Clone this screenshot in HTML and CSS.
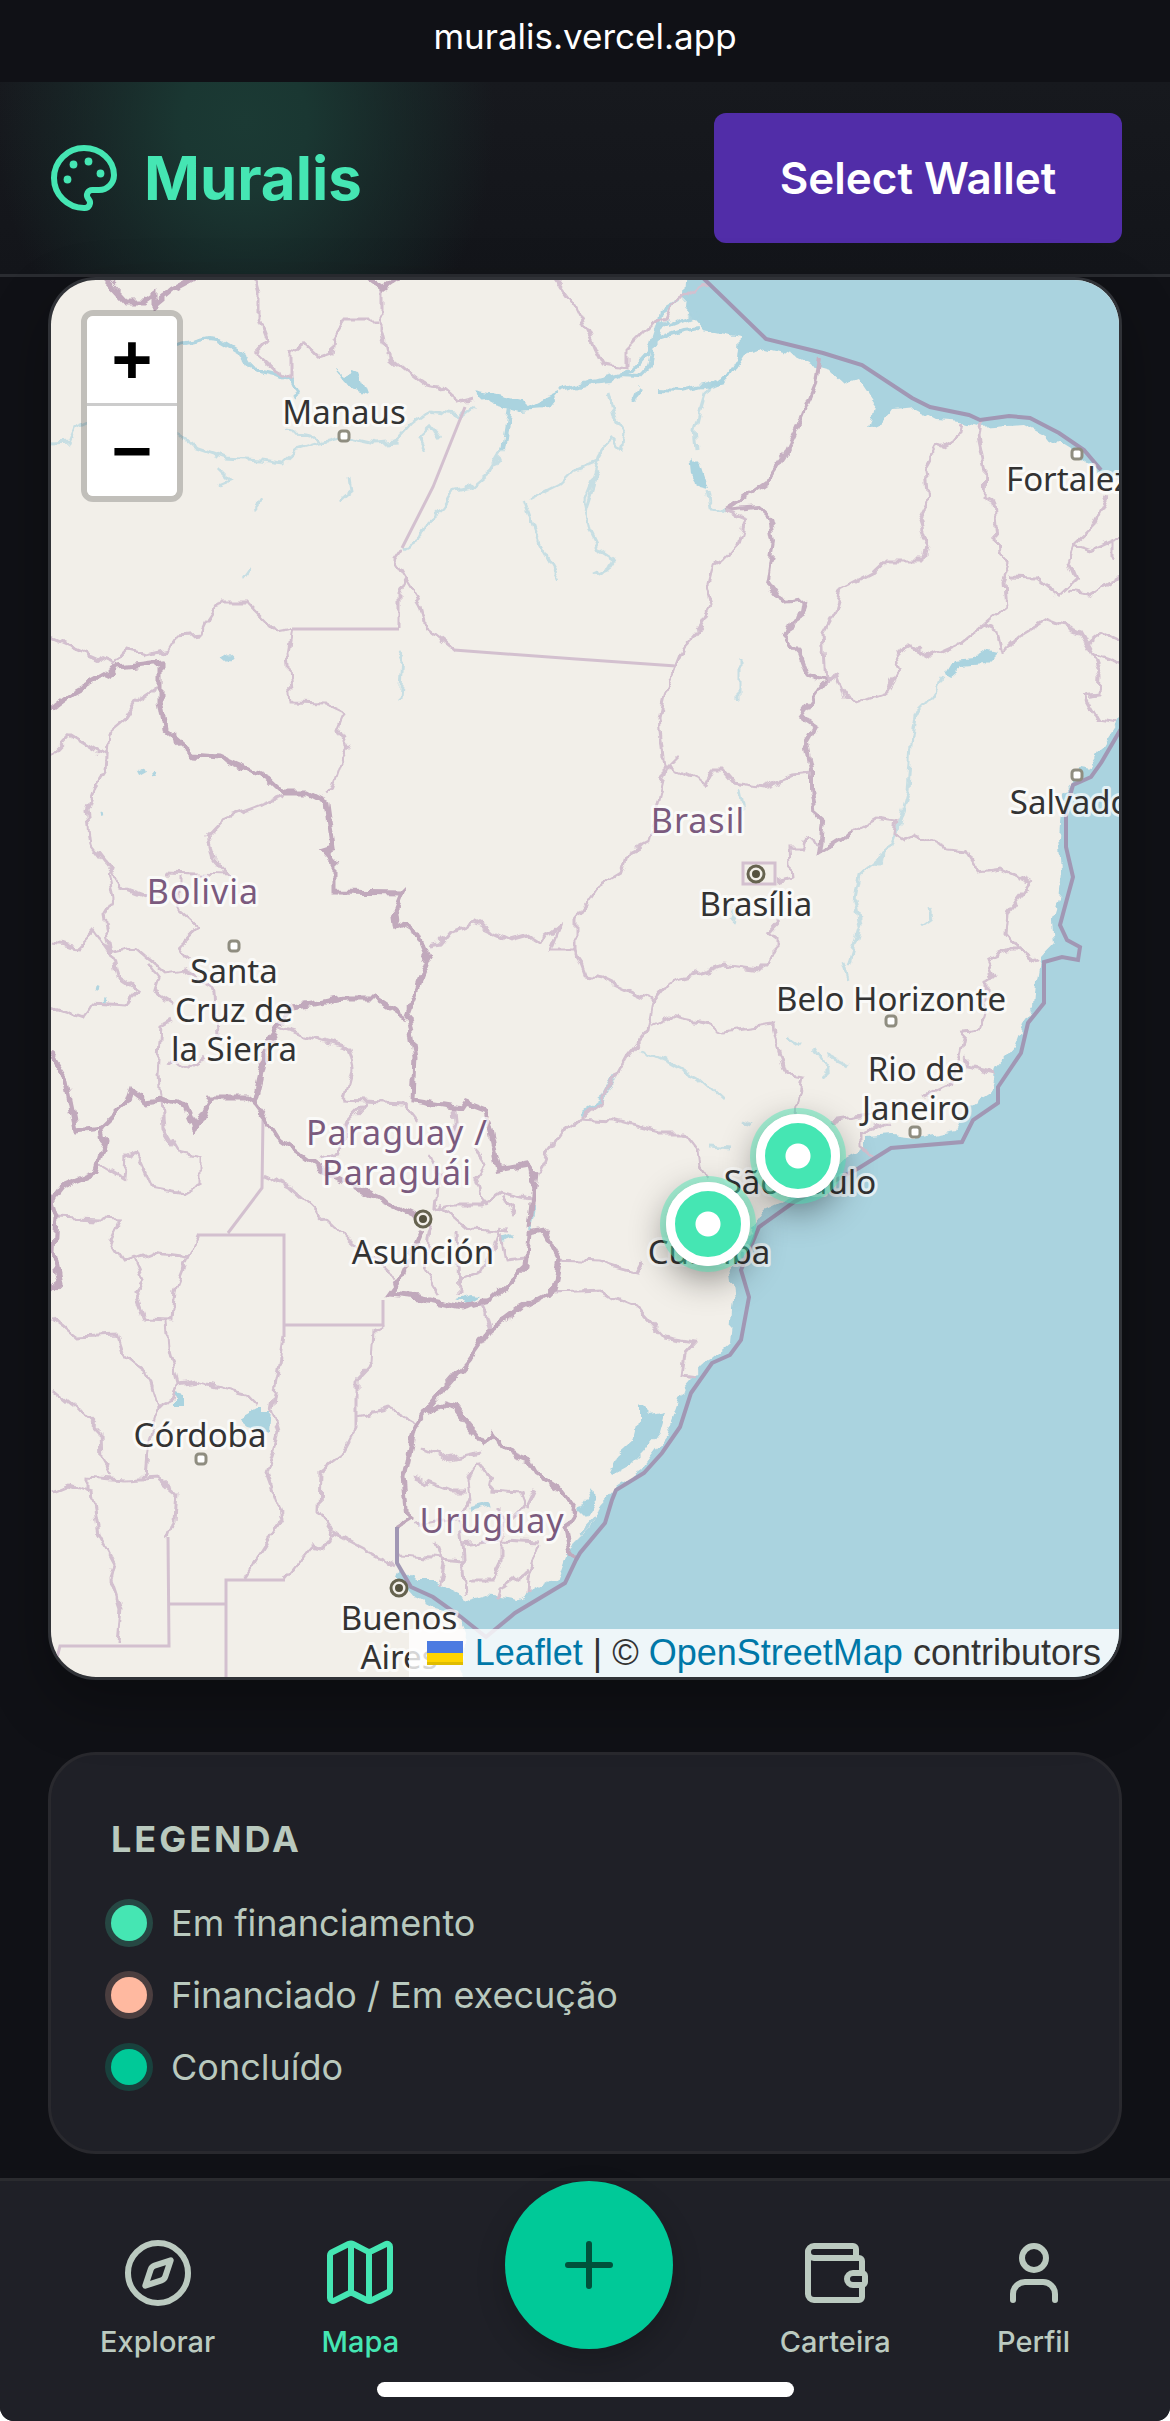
FILE: index.html
```html
<!DOCTYPE html>
<html lang="pt-BR">
<head>
    <meta charset="UTF-8">
    <meta name="viewport" content="width=device-width, initial-scale=1.0">
    <title>Muralis</title>
    <link rel="stylesheet" href="styles.css">
</head>
<body>
    <div class="app">
        <div class="url-bar">muralis.vercel.app</div>

        <!-- Header -->
        <header class="header">
            <a class="brand" href="#">
                <svg class="icon" viewBox="0 0 24 24">
                    <path d="M12 22a1 1 0 0 1 0-20 10 9 0 0 1 10 9 5 5 0 0 1-5 5h-2.250a1.750 1.750 0 0 0-1.400 2.800l.3.4a1.750 1.750 0 0 1-1.400 2.800z"/>
                    <circle class="dot" cx="13.5" cy="6.5" r="1"/>
                    <circle class="dot" cx="17.500" cy="10.500" r="1"/>
                    <circle class="dot" cx="6.500" cy="12.500" r="1"/>
                    <circle class="dot" cx="8.500" cy="7.500" r="1"/>
                </svg>
                <span>Muralis</span>
            </a>
            <button class="wallet-button" type="button">Select Wallet</button>
        </header>

        <main class="content">
            <!-- Map -->
            <section class="map">
                <svg class="map-canvas" viewBox="51 280 1068 1397">
                    <defs>
                        <filter id="rough" filterUnits="userSpaceOnUse" x="31" y="260" width="1108" height="1437">
                            <feTurbulence type="fractalNoise" baseFrequency="0.07" numOctaves="2" seed="4" result="noise"/>
                            <feDisplacementMap in="SourceGraphic" in2="noise" scale="12" xChannelSelector="R" yChannelSelector="G"/>
                        </filter>
                    </defs>
                    <rect class="land" x="51" y="280" width="1068" height="1397"/>

                    <!-- Sea and lakes -->
                    <g class="water" filter="url(#rough)">
                        <path d="M687 270L684 307 705 330 739 337 737 358 725 378 707 387 726 383 744 355 766 349 791 355 812 365 830 370 844 383 858 378 875 403 869 427 884 420 891 410 914 408 937 420 962 422 980 427 1023 424 1041 433 1069 450 1094 468 1101 473 1130 486V270z"/>
                        <path d="M1130 705L1109 737 1091 767 1080 765 1073 783 1062 797 1059 837 1062 870 1059 900 1053 920 1055 942 1041 957 1037 980 1035 1007 1023 1023 1014 1047 996 1067 991 1093 969 1107 957 1130 916 1138 891 1135 866 1137 866 1148 844 1160 794 1197 766 1210 751 1233 748 1240 730 1267 734 1300 730 1343 701 1367 684 1387 676 1410 666 1437 641 1470 616 1487 601 1503 594 1523 580 1540 565 1557 558 1577 536 1590 519 1600 486 1595 469 1600 447 1590 436 1582 415 1582 401 1567 397 1577 415 1597 436 1608 456 1613 465 1633 460 1690H1130z"/>
                        <path d="M639 1403L651 1415 666 1412 660 1433 644 1453 630 1467 612 1477 609 1472 617 1455 634 1440 639 1420z"/>
                        <path d="M592 1490L594 1503 586 1517 579 1510z"/>
                        <path d="M336 370L346 378 350 370 358 372 366 393 350 388z"/>
                        <path d="M474 390L490 393 520 400 528 408 560 392 545 410 520 412 490 404z"/>
                        <path d="M690 455L700 465 708 490 700 488 692 475z"/>
                        <path d="M240 1420L258 1410 270 1410 268 1432 250 1428z"/>
                        <path d="M175 1392L183 1394 183 1406 175 1406z"/>
                        <path d="M455 1299L470 1295 482 1296 468 1305z"/>
                        <path d="M943 675L952 660 975 658 990 648 998 650 984 664 962 666 948 678z"/>
                    </g>

                    <!-- Rivers -->
                    <g class="river" filter="url(#rough)">
                        <path class="wide" d="M177 345L207 338 218 339 240 352 250 368 276 374 290 380 298 397M560 392L590 382 610 380 632 370 648 352 655 330 668 320M580 386L620 375 640 376 650 365 655 340 684 330 700 328M635 400L640 388M658 391L680 392 707 386 728 380M509 408L502 450M655 345L662 310 680 300M669 324L700 312"/>
                        <path d="M502 450L490 470 470 487 455 490 444 508 425 525 418 540 404 548M177 432L195 448 225 458 262 460 282 463 296 450 316 444 344 437 375 444 396 442 412 424 430 411 460 416 474 405M285 431L310 434 325 444M607 390L615 420 625 435 622 450 610 438 598 458 592 480 584 500 590 530 600 550 615 560 608 570 595 576M707 387L700 410 695 430 697 450M708 492L711 508 726 510M51 444L70 443 76 428 90 422M530 500L560 485 575 470 600 460M524 500L540 545 560 580M598 470L585 510M220 470L230 480 220 484M253 510L262 498M340 500L352 490 350 478M243 580L250 570M398 650L403 660 400 700M425 451L418 436 430 425 440 438"/>
                        <path d="M739 660V700M940 678L932 698 915 715 911 745 908 790 900 820 890 850 860 875 855 900 860 925 848 965M843 962L848 978M640 1049L670 1063 700 1080 722 1100M815 1050L828 1070 820 1078M828 1055L848 1065M786 1036L800 1045M710 1146L730 1148M740 1120L750 1124M740 790L744 810M930 910L932 918 922 925M736 905L730 920"/>
                        <path class="wide" d="M580 1116L604 1098 616 1075M224 655L230 660M470 1510L490 1505M501 1240L515 1236M530 1230L534 1205M580 1535L594 1520M573 1548L596 1525M137 775L146 770M154 772L155 778M101 813L105 812M95 987L99 988M104 1000L107 1001"/>
                    </g>

                    <!-- State and province borders -->
                    <g class="state" filter="url(#rough)">
                        <path d="M254 275L259 293 259 320 267 340 256 352 276 370 290 378 290 353 304 343 319 357 331 353 333 337 344 319 379 319M381 287V330L386 353 404 368 426 385 440 387 458 402 474 398"/>
                        <path d="M402 548L394 560 406 580 399 593 399 628M292 629L276 632 247 602 220 602 208 620 201 635 177 637 169 650 147 655 126 650 113 665 51 638M406 580L420 603 426 628 454 650"/>
                        <path d="M292 629L288 653 292 703 326 704 345 713 338 730 349 750 340 763 331 790 324 794"/>
                        <path d="M160 687L136 703 126 718 108 733 105 770 94 787 86 810 90 843 111 870 122 887 147 896M51 755L70 735 106 757"/>
                        <path d="M552 275L576 307 590 337 594 347 603 365 626 368 626 350 651 325 666 317 671 305 707 283"/>
                        <path class="bold" d="M820 355L816 383 798 427 784 457 766 483 726 510 757 507 769 518 773 540 767 580 784 603 805 600 803 612 791 620 785 637 800 653 809 677 826 682 801 717 816 727 807 743 812 770 812 787 816 817 823 823 819 853 851 833"/>
                        <path d="M851 833L876 819 896 822 894 833 905 840 916 833 948 848 966 850 980 872 1001 869 1030 883 1007 913 1005 932 1019 950 1037 963"/>
                        <path d="M726 510L746 518 739 543 726 558 712 565 707 585 712 607 701 627 684 647 676 667 664 697 659 720 664 767 664 780 650 840 630 850 623 873 598 888 580 915 576 920 576 950 551 950 560 927 540 942 529 935 511 940 474 923 451 932 440 945 428 947"/>
                        <path d="M576 950L580 962 585 975 601 978 653 1002 648 1030 626 1057 601 1103 580 1118 561 1133 547 1153 540 1173"/>
                        <path d="M653 1002L669 982 705 972 723 965 759 970 776 953 776 937 769 932 780 920M776 882L793 878 791 847 801 847 805 837 820 844"/>
                        <path d="M651 1025L669 1017 709 1025 723 1032 773 1025 780 1053 787 1075 803 1077 796 1112M580 1118L612 1120 659 1132 684 1132 698 1150 700 1167 709 1180"/>
                        <path d="M830 1120L862 1115 883 1112M925 1098L948 1087 959 1057 964 1033 980 1031 985 1013 985 980 994 977 987 960 1009 950 1019 950M966 1057L969 1067 996 1073M887 1123L862 1133 862 1147 873 1157"/>
                        <path d="M964 423L962 433 937 448 925 470 928 503 919 520 928 547 925 560 887 560 873 573 841 590 834 613 823 633 826 683 837 677 844 698 857 703 887 692 901 667 896 653 909 646 930 657 962 643 984 625 1005 607 1003 583 1010 563 998 550 994 503 984 497 985 470 978 437 980 423"/>
                        <path d="M1010 578L1037 579 1059 596 1076 580 1069 563 1075 545 1091 530 1107 497M1075 545L1091 550 1125 535M1069 592L1091 595 1125 574M984 625L998 632 1003 653 1018 638 1048 620 1080 632 1092 653 1101 677 1100 695 1085 697 1098 720 1118 723M1087 645L1103 632 1125 642M1092 653L1125 665M1112 560V540"/>
                        <path d="M664 780L669 767 705 783 712 770 723 770 734 783 764 788 794 775 812 773M664 770L676 758"/>
                        <path d="M283 797L226 818 208 837 213 858 228 875 163 873M179 877V910L199 928 179 947 188 960M108 870L113 900 104 915 111 953 117 977 136 990 126 1005 94 1003 83 1018 52 1007M52 942L79 947 95 930 111 953 135 947 165 973 183 970 215 990 217 1037M149 965L158 977 154 990 172 1002M172 1018L161 1024 158 1077 160 1097M168 1060L190 1067 205 1058"/>
                        <path d="M277 1027L347 1047 352 1070 344 1100 404 1103 417 1120M365 1103L347 1122 340 1153 319 1158M161 1100L163 1130 176 1152 201 1157 201 1183 183 1193 151 1187 136 1153 126 1157 124 1178 99 1163"/>
                        <path d="M263 1175L290 1187 344 1237 351 1243 397 1277M56 1217L119 1220 110 1240 124 1262 151 1252 188 1257 197 1237M133 1255L144 1280 135 1293 144 1317 172 1318 175 1290 188 1257M167 1320L169 1350 178 1385 197 1382 247 1395 258 1407M178 1385L172 1400 158 1407 147 1373 126 1357 119 1335 76 1337 51 1317M158 1407L148 1440 145 1477M52 1388L79 1410 101 1433 102 1460 111 1475"/>
                        <path d="M88 1494V1477L126 1480 158 1478 176 1493 174 1520 168 1537M52 1492L69 1485 92 1492 99 1533 115 1563 111 1580 120 1607 117 1645M284 1337L272 1410 279 1433 267 1473 283 1517 245 1578M285 1580L313 1545 326 1548 333 1533"/>
                        <path d="M383 1325L374 1330 372 1363 356 1380 356 1427 340 1457 320 1472 319 1513 333 1533 394 1565M356 1417L390 1409 415 1423M481 1300L490 1330"/>
                        <path d="M455 1110L457 1140M429 1155L438 1175 435 1210 455 1205 480 1205 500 1192 535 1200M475 1150L485 1165 476 1180 485 1205M432 1222L428 1240 425 1270 440 1295M457 1230L459 1295M459 1280L480 1272 492 1250 500 1228M500 1235L505 1260 526 1258M439 1205L470 1230 510 1232M502 1195L515 1215"/>
                        <path d="M419 1447L450 1459 481 1452M414 1478L450 1492 466 1492M478 1462L468 1480 470 1500 462 1517 412 1525M478 1462L492 1480 490 1490 520 1492 525 1505 512 1518M535 1490L528 1505M460 1520L462 1545 466 1595M398 1555L430 1557 463 1560M435 1540L444 1565 440 1585M502 1520V1560L492 1580 468 1580M540 1545L530 1575 529 1595M529 1570L500 1590 497 1600M463 1545L500 1540 540 1542M501 1505V1520"/>
                        <path d="M558 1260L600 1262 619 1268 637 1273 644 1260M554 1292L600 1290 612 1298 637 1308 664 1338 694 1343 685 1353 682 1375 696 1377"/>
                    </g>
                    <g class="state">
                        <path d="M465 407L433 487 402 548M399 629H292M454 650L576 659 676 666M263 1118L262 1188 228 1233M197 1235H284V1337M285 1325H383V1300M168 1537L169 1646H60L56 1662M169 1604H226M226 1677V1580H285"/>
                        <path d="M743 863H775V884H743z"/>
                    </g>

                    <!-- Country borders -->
                    <g class="country" filter="url(#rough)">
                        <path d="M101 275L126 302 144 302 154 295 154 305 172 290 200 275M369 277L383 287 397 277"/>
                        <path d="M45 713L72 693 119 667 160 662 160 700 165 730 194 755 219 757 244 768 269 780 283 793 308 793 327 803 333 847 324 850 336 863 336 891 401 892 395 907 397 923 417 935 428 960 408 1015 415 1057 413 1100 461 1108 465 1102 486 1110 499 1170 526 1165 536 1173 529 1227"/>
                        <path d="M404 1017L376 998 344 998 290 1009 269 1040 254 1103 247 1098 210 1098 195 1128 186 1107 161 1100 147 1102 131 1090 127 1102 101 1127 76 1130 65 1077 48 1050M101 1127L104 1140 95 1173 61 1187 51 1200 56 1217 54 1253 60 1283 48 1295"/>
                        <path d="M254 1103L265 1118 279 1140 319 1168 361 1190 419 1217"/>
                        <path d="M397 1527L408 1520 404 1477 415 1427 426 1410 469 1360 490 1330 519 1308 554 1290 560 1260 544 1230 529 1233 526 1267 490 1300 461 1307 419 1298 388 1295 404 1273 422 1230"/>
                        <path d="M426 1412L444 1404 454 1407 483 1443 494 1435 504 1450 529 1460 536 1473 558 1487 577 1512 565 1530 569 1550 575 1558"/>
                    </g>
                    <g class="maritime">
                        <path d="M700 275L766 339 823 353 862 365 912 398 930 407 969 415 980 420 1009 416 1030 418 1059 433 1084 450 1101 470"/>
                        <path d="M1125 722L1101 763 1091 777 1073 785 1066 810 1066 847 1073 877 1064 910 1060 925 1067 940 1080 947 1078 960 1062 957 1044 962 1044 1003 1028 1023 1021 1053 998 1087 998 1103 973 1120 962 1142 891 1148 859 1168 794 1202 759 1227 741 1270 749 1297 741 1340 730 1355 712 1363 691 1393 680 1427 662 1453 644 1473 616 1490 612 1500 605 1523 580 1553 576 1560 565 1583 515 1613 486 1637 461 1617 433 1597 411 1587 397 1563 397 1527"/>
                    </g>

                    <!-- Cities -->
                    <g class="city">
                        <rect x="339" y="431" width="10" height="10" rx="3"/>
                        <rect x="1072" y="449" width="10" height="10" rx="3"/>
                        <rect x="229" y="941" width="10" height="10" rx="3"/>
                        <rect x="1072" y="770" width="10" height="10" rx="3"/>
                        <rect x="886" y="1016" width="10" height="10" rx="3"/>
                        <rect x="910" y="1127" width="10" height="10" rx="3"/>
                        <rect x="196" y="1454" width="10" height="10" rx="3"/>
                    </g>
                    <g class="capital">
                        <circle cx="756" cy="874" r="8"/><circle class="core" cx="756" cy="874" r="4"/>
                        <circle cx="423" cy="1219" r="8"/><circle class="core" cx="423" cy="1219" r="4"/>
                        <circle cx="399" cy="1588" r="8"/><circle class="core" cx="399" cy="1588" r="4"/>
                    </g>
                    <g class="label">
                        <text x="344" y="424">Manaus</text>
                        <text x="1077" y="491">Fortaleza</text>
                        <text x="1077" y="814">Salvador</text>
                        <text x="234" y="983">Santa<tspan x="234" dy="39">Cruz de</tspan><tspan x="234" dy="39">la Sierra</tspan></text>
                        <text x="756" y="916">Brasília</text>
                        <text x="891" y="1011">Belo Horizonte</text>
                        <text x="916" y="1081">Rio de<tspan x="916" dy="39">Janeiro</tspan></text>
                        <text x="800" y="1194">São Paulo</text>
                        <text x="709" y="1264">Curitiba</text>
                        <text x="423" y="1264">Asunción</text>
                        <text x="200" y="1447">Córdoba</text>
                        <text x="399" y="1630">Buenos<tspan x="399" dy="39">Aires</tspan></text>
                    </g>
                    <g class="label label-country">
                        <text x="203" y="904">Bolivia</text>
                        <text x="698" y="833">Brasil</text>
                        <text x="397" y="1145">Paraguay /<tspan x="397" dy="40">Paraguái</tspan></text>
                        <text x="492" y="1533">Uruguay</text>
                    </g>
                </svg>

                <div class="zoom-control">
                    <button type="button" aria-label="Zoom in">+</button>
                    <button type="button" aria-label="Zoom out">−</button>
                </div>

                <button class="marker marker-sao-paulo" type="button" aria-label="São Paulo"></button>
                <button class="marker marker-curitiba" type="button" aria-label="Curitiba"></button>

                <div class="attribution">
                    <svg class="flag" viewBox="0 0 12 8">
                        <path fill="#4C7BE1" d="M0 0h12v4H0z"/>
                        <path fill="#FFD500" d="M0 4h12v3H0z"/>
                        <path fill="#E0BC00" d="M0 7h12v1H0z"/>
                    </svg>
                    <p><a href="#">Leaflet</a> | © <a href="#">OpenStreetMap</a> contributors</p>
                </div>
            </section>

            <!-- Legend -->
            <section class="legend">
                <h2>LEGENDA</h2>
                <ul>
                    <li><span class="status funding"></span>Em financiamento</li>
                    <li><span class="status running"></span>Financiado / Em execução</li>
                    <li><span class="status done"></span>Concluído</li>
                </ul>
            </section>
        </main>

        <!-- Bottom navigation -->
        <nav class="nav">
            <div class="nav-items">
                <a class="nav-link" href="#">
                    <svg class="icon" viewBox="0 0 24 24">
                        <circle cx="12" cy="12" r="10"/>
                        <path d="m16.240 7.760-1.804 5.411a2 2 0 0 1-1.265 1.265L7.760 16.240l1.804-5.411a2 2 0 0 1 1.265-1.265z"/>
                    </svg>
                    <span>Explorar</span>
                </a>
                <a class="nav-link active" href="#">
                    <svg class="icon" viewBox="0 0 24 24">
                        <path d="M8.200 2.350 2.700 5.100A1.250 1.250 0 0 0 2 6.200V20.300a1 1 0 0 0 1.450.9L8.200 18.850a1.800 1.800 0 0 1 1.600 0l4.500 2.250a1.800 1.800 0 0 0 1.600 0l5.400-2.700a1.250 1.250 0 0 0 .7-1.100V3.300a1 1 0 0 0-1.450-.9L15.900 4.700a1.800 1.800 0 0 1-1.600 0L9.800 2.350a1.800 1.800 0 0 0-1.600 0z"/>
                        <path d="M15 5v16M9 2.500v16"/>
                    </svg>
                    <span>Mapa</span>
                </a>
                <button class="add-button" type="button" aria-label="Novo mural">
                    <svg class="icon" viewBox="0 0 24 24">
                        <path d="M5 12h14M12 5v14"/>
                    </svg>
                </button>
                <a class="nav-link" href="#">
                    <svg class="icon" viewBox="0 0 24 24">
                        <path d="M19 7V4a1 1 0 0 0-1-1H5a2 2 0 0 0 0 4h15a1 1 0 0 1 1 1v4h-3a2 2 0 0 0 0 4h3a1 1 0 0 0 1-1v-2a1 1 0 0 0-1-1"/>
                        <path d="M3 5v14a2 2 0 0 0 2 2h15a1 1 0 0 0 1-1v-4"/>
                    </svg>
                    <span>Carteira</span>
                </a>
                <a class="nav-link" href="#">
                    <svg class="icon" viewBox="0 0 24 24">
                        <path d="M19 21v-2a4 4 0 0 0-4-4H9a4 4 0 0 0-4 4v2"/>
                        <circle cx="12" cy="7" r="4"/>
                    </svg>
                    <span>Perfil</span>
                </a>
            </div>
            <div class="home-indicator"></div>
        </nav>
    </div>
</body>
</html>
```
FILE: styles.css
```css
* {
    box-sizing: border-box;
}

body {
    margin: 0;
    background: #fff;
    font-family: Inter, sans-serif;
}

a {
    text-decoration: none;
}

button {
    padding: 0;
    border: none;
    font-family: inherit;
    cursor: pointer;
}

.app {
    background: #101116;
    border-radius: 0 0 14px 14px;
    overflow: hidden;
}

.icon {
    display: block;
    width: 72px;
    height: 72px;
    fill: none;
    stroke: currentColor;
    stroke-width: 2;
    stroke-linecap: round;
    stroke-linejoin: round;
}

.url-bar {
    padding-bottom: 10px;
    line-height: 72px;
    font-size: 35px;
    text-align: center;
    color: #fff;
}

/* Header */
.header {
    display: flex;
    align-items: center;
    justify-content: space-between;
    padding: 31px 48px;
    border-bottom: 3px solid #2a2c31;
    background:
        radial-gradient(ellipse 250px 280px at 245px 40px, #1b3a34 0, #1a3732 25%, rgba(26, 55, 50, 0.5) 60%, rgba(26, 55, 50, 0) 100%),
        linear-gradient(#17191e, #13151a);
}

.brand {
    display: flex;
    align-items: center;
    gap: 24px;
    font-size: 60px;
    font-weight: 700;
    color: #45e6b3;
}

.brand .dot {
    fill: currentColor;
    stroke: none;
    r: 1.3px;
}

.wallet-button {
    width: 408px;
    height: 130px;
    border-radius: 12px;
    background: #512da8;
    color: #fff;
    font-size: 44px;
    font-weight: 600;
}

.content {
    padding: 0 48px 24px;
}

/* Map */
.map {
    position: relative;
    overflow: hidden;
    border: 3px solid #303237;
    border-radius: 48px;
    margin-bottom: 72px;
    box-shadow: 0 24px 60px rgba(0, 0, 0, 0.3);
}

.map-canvas {
    display: block;
    width: 100%;
    height: auto;
}

.land {
    fill: #f2efe9;
}

.water {
    fill: #aad3df;
}

.river {
    fill: none;
    stroke: #aad3df;
    stroke-opacity: 0.6;
    stroke-width: 3;
}

.river .wide {
    stroke-opacity: 0.9;
    stroke-width: 4;
}

.state {
    fill: none;
    stroke: #d3c0cf;
    stroke-width: 3;
}

.state .bold {
    stroke: #c6b0c2;
    stroke-width: 4;
}

.country {
    fill: none;
    stroke: #c1a9bc;
    stroke-width: 5;
}

.maritime {
    fill: none;
    stroke: #a197b4;
    stroke-width: 4;
}

.city {
    fill: #fff;
    stroke: #8f8d80;
    stroke-width: 3;
}

.capital {
    fill: #f2efe9;
    stroke: #66634f;
    stroke-width: 3;
}

.capital .core {
    fill: #55523f;
    stroke: none;
}

.label {
    font-family: "Noto Sans", sans-serif;
    font-size: 33px;
    text-anchor: middle;
    fill: #333;
    stroke: rgba(255, 255, 255, 0.7);
    stroke-width: 6;
    stroke-linejoin: round;
    paint-order: stroke;
}

.label-country {
    font-size: 34px;
    letter-spacing: 1px;
    fill: #7b5a7e;
}

.zoom-control {
    position: absolute;
    top: 30px;
    left: 30px;
    border: 6px solid rgba(0, 0, 0, 0.2);
    border-radius: 12px;
}

.zoom-control button {
    display: block;
    width: 90px;
    height: 90px;
    background: #fff;
    background-clip: padding-box;
    color: #000;
    font: bold 70px/80px "Liberation Sans", sans-serif;
}

.zoom-control button:first-child {
    border-bottom: 3px solid #ccc;
    border-radius: 6px 6px 0 0;
}

.zoom-control button:last-child {
    border-radius: 0 0 6px 6px;
}

/* Markers sit at their coordinates on the map */
.marker {
    position: absolute;
    width: 84px;
    height: 84px;
    border: 9px solid #fff;
    border-radius: 50%;
    background: radial-gradient(circle, #fff 12px, #45e6b3 13px);
    background-origin: border-box;
    box-shadow: 0 0 0 6px rgba(69, 230, 179, 0.45), 0 12px 36px rgba(0, 0, 0, 0.45);
    transform: translate(-50%, -50%);
}

.marker-sao-paulo {
    left: 69.9%;
    top: 62.7%;
}

.marker-curitiba {
    left: 61.5%;
    top: 67.6%;
}

.attribution {
    position: absolute;
    right: 0;
    bottom: 0;
    display: flex;
    align-items: center;
    gap: 12px;
    padding: 0 18px;
    background: rgba(255, 255, 255, 0.8);
    font: 36px/48px "Liberation Sans", Arial, sans-serif;
    color: #333;
}

.attribution p {
    margin: 0;
}

.attribution a {
    color: #0078a8;
}

.flag {
    width: 36px;
    height: 24px;
}

/* Legend */
.legend {
    padding: 60px;
    border: 3px solid #29292e;
    border-radius: 48px;
    background: #1f2027;
    color: #b9c9be;
}

.legend h2 {
    margin: 0 0 36px;
    font-size: 36px;
    line-height: 48px;
    font-weight: 700;
    letter-spacing: 3px;
}

.legend ul {
    display: flex;
    flex-direction: column;
    gap: 24px;
    margin: 0;
    padding: 0;
    list-style: none;
}

.legend li {
    display: flex;
    align-items: center;
    gap: 24px;
    font-size: 36px;
    line-height: 48px;
}

.status {
    width: 36px;
    height: 36px;
    border-radius: 50%;
}

.funding {
    background: #45e6b3;
    box-shadow: 0 0 0 6px rgba(69, 230, 179, 0.2);
}

.running {
    background: #ffb9a0;
    box-shadow: 0 0 0 6px rgba(255, 185, 160, 0.2);
}

.done {
    background: #00c998;
    box-shadow: 0 0 0 6px rgba(0, 201, 152, 0.2);
}

/* Bottom navigation */
.nav {
    padding-bottom: 24px;
    border-top: 3px solid #2a2b2f;
    background: #1f2027;
}

.nav-items {
    display: flex;
    align-items: flex-start;
    justify-content: space-between;
    padding: 0 100px;
}

.nav-link {
    display: flex;
    flex-direction: column;
    align-items: center;
    gap: 10px;
    padding-top: 56px;
    color: #bbcac0;
    font-size: 29px;
    line-height: 45px;
    font-weight: 500;
}

.nav-link.active {
    color: #45e6b3;
}

.add-button {
    display: grid;
    place-items: center;
    width: 168px;
    height: 168px;
    border-radius: 50%;
    background: #00c998;
    color: #00513b;
    box-shadow: 0 12px 30px rgba(0, 0, 0, 0.2);
}

.home-indicator {
    width: 417px;
    height: 15px;
    margin: 18px auto 0;
    border-radius: 8px;
    background: #fff;
}
```
